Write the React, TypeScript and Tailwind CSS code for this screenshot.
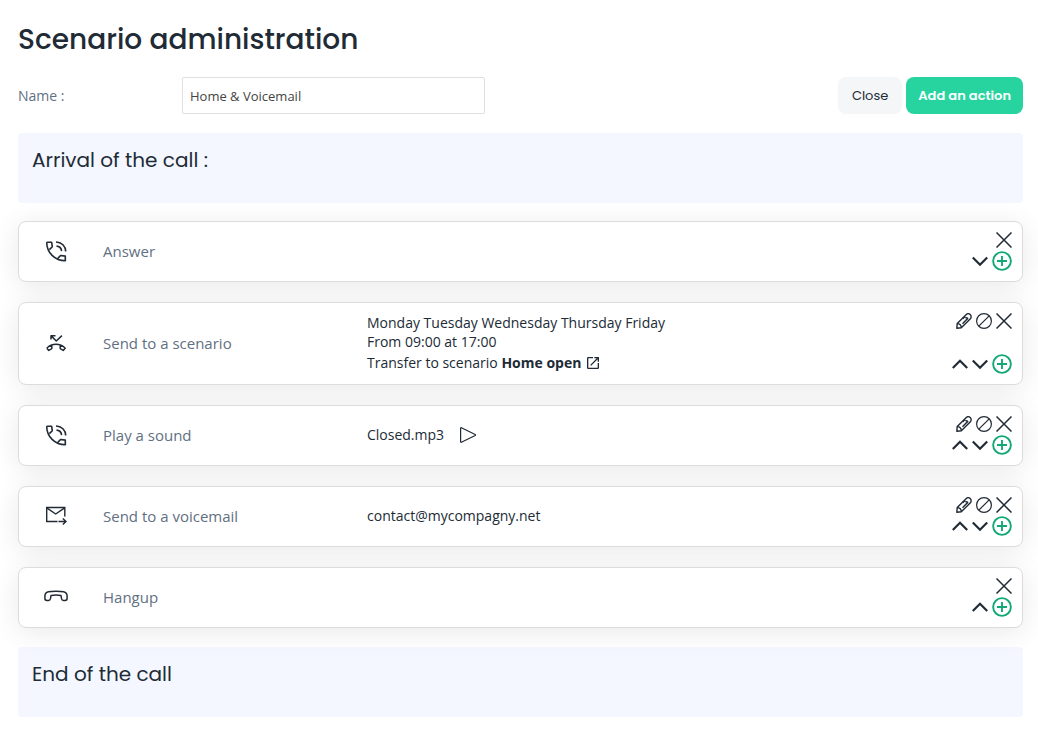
import React, { useState } from 'react';
import { MdOpenInNew } from 'react-icons/md';

type ActionKind = 'edit' | 'disable' | 'remove' | 'up' | 'down' | 'add';

interface Step {
    id: string;
    label: string;
    icon: React.ReactNode;
    detail?: React.ReactNode;
    top: ActionKind[];
    bottom: ActionKind[];
}

/* --- Step icons --- */
function PhoneVoiceIcon() {
    return (
        <svg viewBox="0 0 24 24" className="w-6 h-6" fill="none" stroke="currentColor" strokeWidth="1.6" strokeLinejoin="round" aria-hidden="true">
            <path d="M2.700 3.200h4.900l.7 4.500-2.900 2.900M2.700 3.200c0 10.400 8.200 18.600 18.600 18.600v-4.700l-4.700-.6-2.800 2.900" />
            <path d="M12 3c5.500 0 9.700 4.200 9.700 9.500M12.500 7.100c2.800.2 4.800 2.200 5.100 5" />
        </svg>
    );
}

function PhoneForwardIcon() {
    return (
        <svg viewBox="0 0 24 24" className="w-6 h-6" fill="none" stroke="currentColor" strokeWidth="1.5" strokeLinejoin="round" aria-hidden="true">
            <path d="M7 8.500V4.700h4.500M7.200 4.900l5.100 5.100 5.600-5.400" />
            <path d="M2.800 17.300c5-5.300 13.400-5.300 18.400 0l-2 2.100-3-1.800v-3.200M2.800 17.300l2 2.100 3-1.800v-3.200" />
        </svg>
    );
}

function MailArrowIcon() {
    return (
        <svg viewBox="0 0 24 24" className="w-6 h-6" fill="none" stroke="currentColor" strokeWidth="1.4" aria-hidden="true">
            <path d="M13.500 17.500H2.700V3.500h18.100v9" />
            <path d="M2.700 3.800l9 6.200 9-6.200" />
            <path d="M14.500 17.500h7M18.800 14.400l3.200 3.100-3.200 3.100" />
        </svg>
    );
}

function HangupIcon() {
    return (
        <svg viewBox="0 0 24 24" className="w-6 h-6" fill="none" stroke="currentColor" strokeWidth="1.5" strokeLinejoin="round" aria-hidden="true">
            <path d="M12 6.200c-3 0-5.400.1-7.700.6C2 7.400.9 8.900.9 11v2.500c0 1.200.8 1.900 2 1.900h1.500c1.200 0 1.900-.7 2.100-1.900l.5-3c1.500-.3 3.200-.4 5-.4s3.500.1 5 .4l.5 3c.2 1.200.9 1.900 2.100 1.900h1.500c1.200 0 2-.7 2-1.900V11c0-2.100-1.100-3.600-3.400-4.200-2.300-.5-4.700-.6-7.700-.6z" />
        </svg>
    );
}

/* --- Row controls --- */
const ACTIONS: Record<ActionKind, { title: string; className: string; drawing: React.ReactNode }> = {
    edit: {
        title: 'Edit',
        className: 'w-4 h-4',
        drawing: (
            <g strokeWidth="1.4" strokeLinejoin="round">
                <path d="M.8 15.200l.4-4.600L10.300 1.500c1.100-1.100 2.700-1.100 3.900.1s1.300 3 .2 4.100L5.300 14.800.8 15.200z" />
                <path d="M1.200 10.600c2.600 0 4.100 1.600 4.100 4.200M6.500 10.700l5.600-5.600M9 3.600L6.800 5.800" />
                <path d="M9.300 4.800c1.200-.6 2.300.4 2.100 1.500" />
            </g>
        ),
    },
    disable: {
        title: 'Disable',
        className: 'w-4 h-4',
        drawing: (
            <g strokeWidth="1.2">
                <circle cx="8" cy="8" r="7.4" />
                <path d="M2.800 13.200L13.200 2.800" />
            </g>
        ),
    },
    remove: {
        title: 'Remove',
        className: 'w-4 h-4',
        drawing: <path d="M.5.5l15 15M15.500.5l-15 15" strokeWidth="1.5" />,
    },
    up: {
        title: 'Move up',
        className: 'w-4 h-4',
        drawing: <path d="M.8 12L8 4.800l7.200 7.200" strokeWidth="2.2" />,
    },
    down: {
        title: 'Move down',
        className: 'w-4 h-4',
        drawing: <path d="M.8 4.500L8 11.700l7.200-7.200" strokeWidth="2.2" />,
    },
    add: {
        title: 'Add after',
        className: 'w-5 h-5 text-[#12a876]',
        drawing: (
            <g strokeWidth="1.5">
                <circle cx="8" cy="8" r="7.1" />
                <path d="M8 4v8M4 8h8" />
            </g>
        ),
    },
};

function ActionButton({ kind }: { kind: ActionKind }) {
    const { title, className, drawing } = ACTIONS[kind];
    return (
        <button type="button" aria-label={title} className="cursor-pointer">
            <svg viewBox="0 0 16 16" className={className} fill="none" stroke="currentColor">
                {drawing}
            </svg>
        </button>
    );
}

const STEPS: Step[] = [
    { id: 'answer', label: 'Answer', icon: <PhoneVoiceIcon />, top: ['remove'], bottom: ['down', 'add'] },
    {
        id: 'scenario',
        label: 'Send to a scenario',
        icon: <PhoneForwardIcon />,
        detail: (
            <div className="pt-0.5 leading-[19px]">
                <p>Monday Tuesday Wednesday Thursday Friday</p>
                <p>From 09:00 at 17:00</p>
                <p className="flex items-center gap-1 leading-[23px]">
                    <span>Transfer to scenario <b>Home open</b></span>
                    <a href="#scenario" aria-label="Open scenario">
                        <MdOpenInNew className="w-4 h-4" />
                    </a>
                </p>
            </div>
        ),
        top: ['edit', 'disable', 'remove'],
        bottom: ['up', 'down', 'add'],
    },
    {
        id: 'sound',
        label: 'Play a sound',
        icon: <PhoneVoiceIcon />,
        detail: (
            <div className="flex items-center gap-4">
                <span>Closed.mp3</span>
                <button type="button" aria-label="Play" className="cursor-pointer">
                    <svg viewBox="0 0 16 16" className="w-4 h-4" fill="none" stroke="currentColor" strokeWidth="1.2" strokeLinejoin="round">
                        <path d="M.6 1.200v13.600c0 .5.4.7.8.5l13.800-6.800c.5-.3.5-.7 0-1L1.400.7C1 .5.6.7.6 1.200z" />
                    </svg>
                </button>
            </div>
        ),
        top: ['edit', 'disable', 'remove'],
        bottom: ['up', 'down', 'add'],
    },
    {
        id: 'voicemail',
        label: 'Send to a voicemail',
        icon: <MailArrowIcon />,
        detail: <span>contact@mycompagny.net</span>,
        top: ['edit', 'disable', 'remove'],
        bottom: ['up', 'down', 'add'],
    },
    { id: 'hangup', label: 'Hangup', icon: <HangupIcon />, top: ['remove'], bottom: ['up', 'add'] },
];

function StepCard({ step }: { step: Step }) {
    return (
        <li className="grid grid-cols-[84px_264px_1fr_auto] items-center rounded-lg border border-[#dcdcdc] bg-white pt-2 pr-2.5 pb-2.5 shadow-[0_4px_28px_rgba(0,0,0,0.09)]">
            <div className="flex justify-center pr-2.5">{step.icon}</div>
            <div className="text-[15px] leading-6 text-[#5f7082]">{step.label}</div>
            <div className="text-sm leading-5">{step.detail}</div>
            <div className="flex flex-col justify-between gap-px self-stretch">
                <div className="flex h-5 items-center justify-end gap-1">
                    {step.top.map((kind) => <ActionButton key={kind} kind={kind} />)}
                </div>
                <div className="flex h-5 items-center justify-end gap-1">
                    {step.bottom.map((kind) => <ActionButton key={kind} kind={kind} />)}
                </div>
            </div>
        </li>
    );
}

function Banner({ children }: { children: React.ReactNode }) {
    return (
        <section className="h-[70px] rounded bg-[#f4f7ff] px-3.5 pt-3">
            <h2 className="font-['Poppins','Inter',sans-serif] text-xl leading-[30px]">{children}</h2>
        </section>
    );
}

export default function App() {
    const [name, setName] = useState('Home & Voicemail');

    return (
        <main className="min-h-screen bg-white pt-5 pr-[15px] pb-4 pl-[18px] font-['Open_Sans',sans-serif] text-[#212b36]">
            <h1 className="font-['Poppins','Inter',sans-serif] text-[28px] leading-10 font-medium">Scenario administration</h1>

            <div className="mt-[17px] flex items-center">
                <label htmlFor="scenario-name" className="w-[164px] text-sm text-[#5f7082]">Name :</label>
                <input
                    id="scenario-name"
                    value={name}
                    onChange={(e) => setName(e.target.value)}
                    className="h-[37px] w-[303px] rounded-xs border border-[#dedfe3] px-[7px] text-[13px] text-[#444444]"
                />
                <div className="ml-auto flex gap-1 font-['Poppins','Inter',sans-serif] text-[13px]">
                    <button type="button" className="h-[37px] cursor-pointer rounded-lg bg-[#f5f6f8] px-3.5">Close</button>
                    <button type="button" className="h-[37px] cursor-pointer rounded-lg bg-[#27d49f] px-3 font-semibold text-white">Add an action</button>
                </div>
            </div>

            <div className="mt-[19px]">
                <Banner>Arrival of the call :</Banner>
                <ul className="mt-[18px] mb-[19px] flex flex-col gap-5">
                    {STEPS.map((step) => <StepCard key={step.id} step={step} />)}
                </ul>
                <Banner>End of the call</Banner>
            </div>
        </main>
    );
}
